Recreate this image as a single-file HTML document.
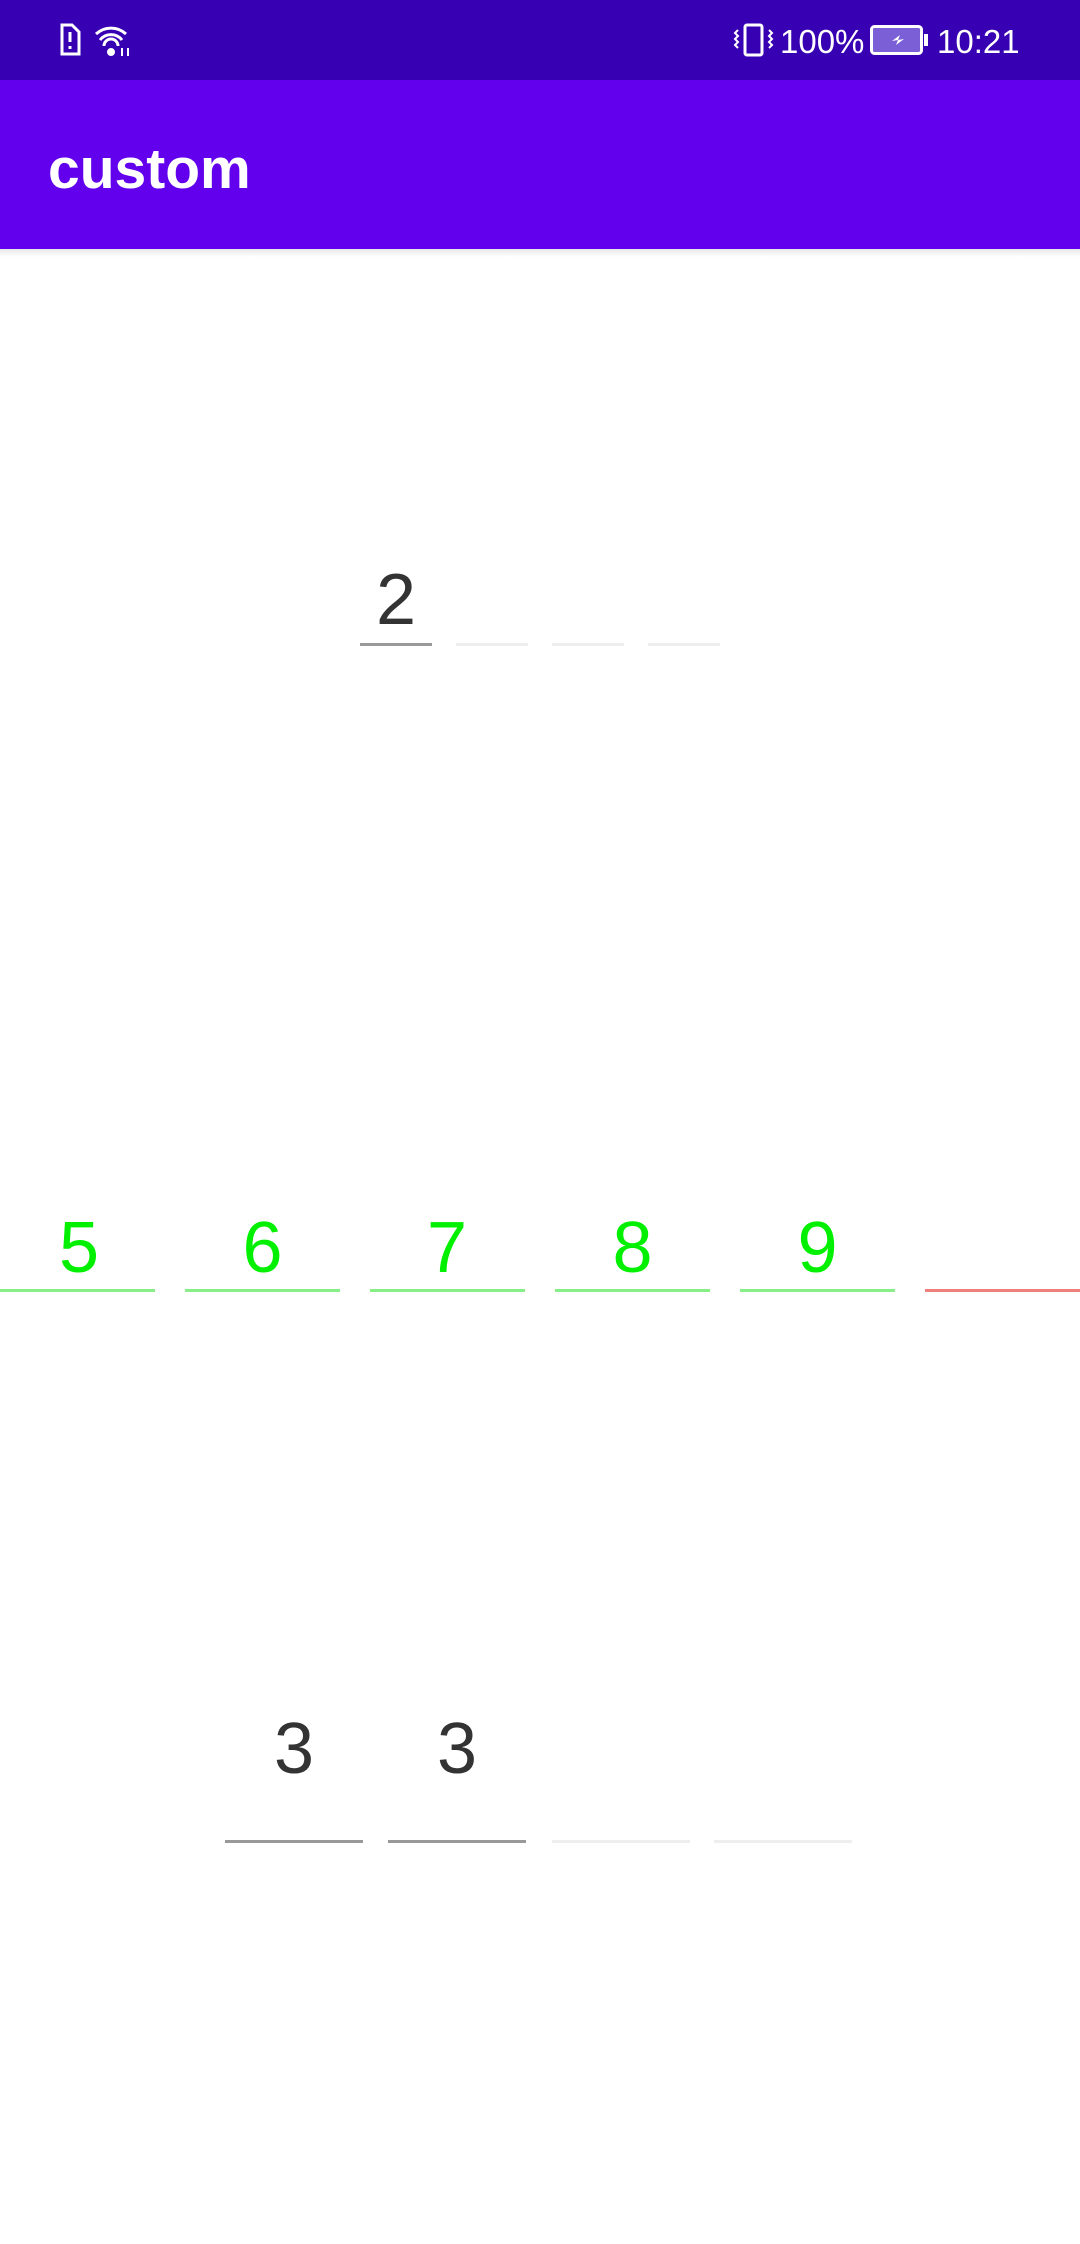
<!DOCTYPE html>
<html><head><meta charset="utf-8"><style>
body{margin:0;width:1080px;height:2244px;background:#fff;position:relative;overflow:hidden;font-family:"Liberation Sans",sans-serif}
.a{position:absolute}
.t{position:absolute;line-height:1;text-align:center}
.l{position:absolute;height:3px}
</style></head><body>
<div class="a" style="left:0;top:0;width:1080px;height:80px;background:#3700b3"></div>
<div class="a" style="left:0;top:80px;width:1080px;height:169px;background:#6200ee"></div>
<div class="a" style="left:0;top:249px;width:1080px;height:8px;background:linear-gradient(#e8e8e8,#fff)"></div>
<svg class="a" style="left:58px;top:22px" width="80" height="36" viewBox="0 0 80 36" fill="none" stroke="#fff" stroke-width="3">
<path d="M4 3h10l7 7v22H4z"/><path d="M12 10v10M12 24v3"/>
<path d="M38 12a22 22 0 0 1 30 0M42 18a14 14 0 0 1 22 0M46 24a7 7 0 0 1 14 0"/><circle cx="53" cy="30" r="2.5" fill="#fff"/>
<path d="M64 26v8M70 26v8" stroke-width="2"/>
</svg>
<svg class="a" style="left:732px;top:22px" width="44" height="36" viewBox="0 0 44 36" fill="none" stroke="#fff" stroke-width="3">
<rect x="13" y="3" width="17" height="30" rx="2"/><path d="M6 8l-3 3 3 3-3 3 3 3-3 3 3 3M37 8l3 3-3 3 3 3-3 3 3 3-3 3" stroke-width="2"/>
</svg>
<div class="t" style="left:780px;top:25px;font-size:33px;color:#fff">100%</div>
<svg class="a" style="left:870px;top:25px" width="60" height="30" viewBox="0 0 60 30">
<rect x="1.5" y="1.5" width="50" height="27" rx="3" fill="#7b5fd6" stroke="#fff" stroke-width="3"/><rect x="54" y="9" width="4" height="12" fill="#fff"/><path d="M22 16l8-6-2 5 6-1-8 6 2-5z" fill="#fff"/>
</svg>
<div class="t" style="left:937px;top:25px;font-size:33px;color:#fff">10:21</div>
<div class="t" style="left:48px;top:141px;font-size:57px;color:#fff;font-weight:bold;text-align:left">custom</div>
<div class="t" style="left:360px;top:564px;width:72px;font-size:72px;color:#333">2</div>
<div class="l" style="left:360px;top:643px;width:72px;background:#999"></div>
<div class="l" style="left:456px;top:643px;width:72px;background:#eee"></div>
<div class="l" style="left:552px;top:643px;width:72px;background:#eee"></div>
<div class="l" style="left:648px;top:643px;width:72px;background:#eee"></div>
<div class="t" style="left:0;top:1212px;width:158px;font-size:72px;color:#00f000">5</div>
<div class="t" style="left:185px;top:1212px;width:155px;font-size:72px;color:#00f000">6</div>
<div class="t" style="left:369px;top:1212px;width:156px;font-size:72px;color:#00f000">7</div>
<div class="t" style="left:555px;top:1212px;width:155px;font-size:72px;color:#00f000">8</div>
<div class="t" style="left:740px;top:1212px;width:155px;font-size:72px;color:#00f000">9</div>
<div class="l" style="left:0;top:1289px;width:155px;background:#88ee88"></div>
<div class="l" style="left:185px;top:1289px;width:155px;background:#88ee88"></div>
<div class="l" style="left:370px;top:1289px;width:155px;background:#88ee88"></div>
<div class="l" style="left:555px;top:1289px;width:155px;background:#88ee88"></div>
<div class="l" style="left:740px;top:1289px;width:155px;background:#88ee88"></div>
<div class="l" style="left:925px;top:1289px;width:155px;background:#ee8080"></div>
<div class="t" style="left:225px;top:1713px;width:138px;font-size:72px;color:#333">3</div>
<div class="t" style="left:388px;top:1713px;width:138px;font-size:72px;color:#333">3</div>
<div class="l" style="left:225px;top:1840px;width:138px;background:#999"></div>
<div class="l" style="left:388px;top:1840px;width:138px;background:#999"></div>
<div class="l" style="left:552px;top:1840px;width:138px;background:#eee"></div>
<div class="l" style="left:714px;top:1840px;width:138px;background:#eee"></div>
</body></html>
